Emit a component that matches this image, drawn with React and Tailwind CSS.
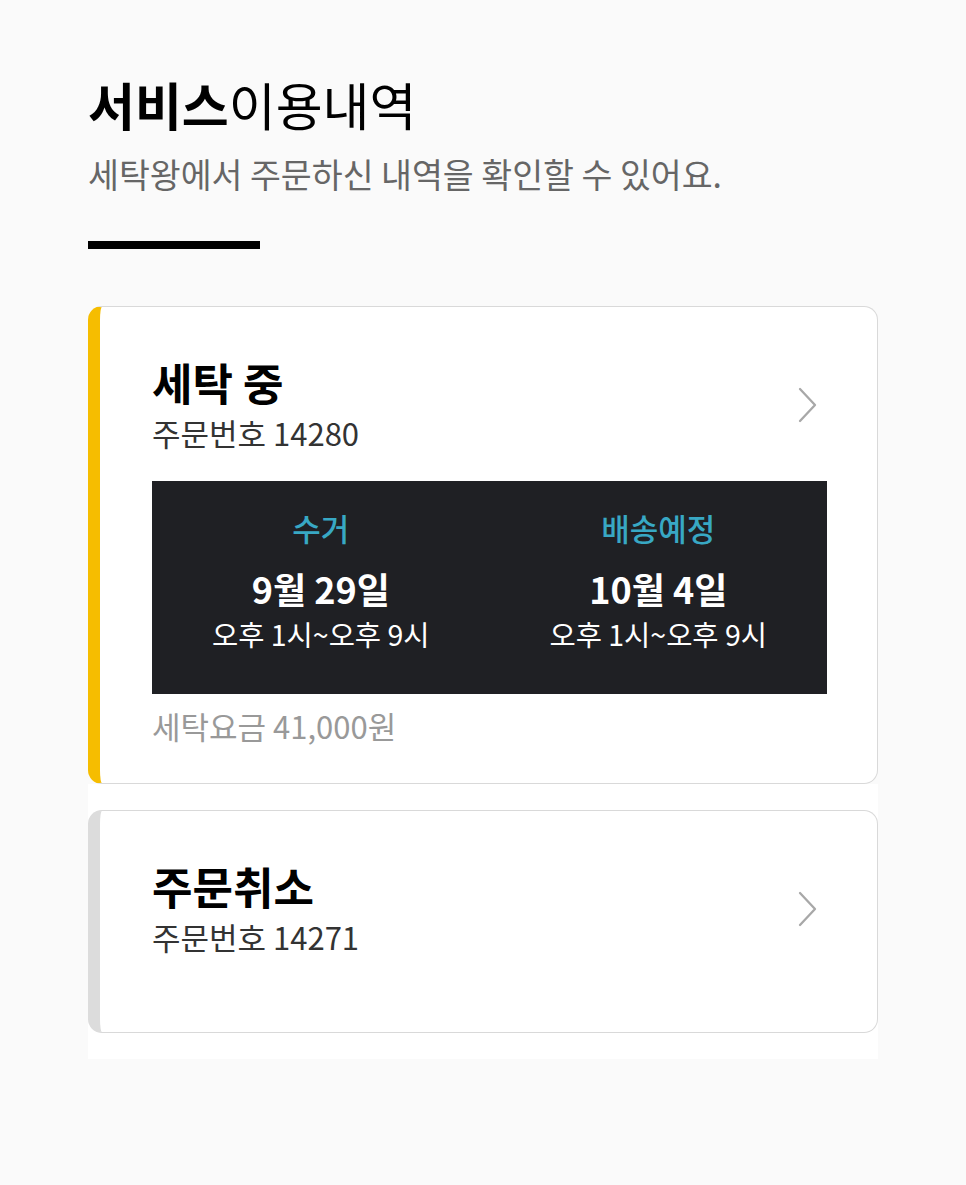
import React from 'react'

const font = { fontFamily: '"Noto Sans CJK KR", "Noto Sans", sans-serif' }

const Chevron = () => (
  <svg width="24" height="38" viewBox="0 0 24 38" fill="none" className="shrink-0">
    <path d="M4 3 L19 19 L4 35" stroke="#a8a8a8" strokeWidth="2.3" strokeLinecap="round" strokeLinejoin="round" />
  </svg>
)

const orders = [
  {
    id: 14280,
    status: '세탁 중',
    active: true,
    pickup: { date: '9월 29일', time: '오후 1시~오후 9시' },
    delivery: { date: '10월 4일', time: '오후 1시~오후 9시' },
    price: '41,000원'
  },
  { id: 14271, status: '주문취소', active: false }
]

const Schedule = ({ label, date, time }) => (
  <div className="flex flex-col items-center">
    <div className="text-[31px] leading-[40px] font-medium text-[#38a8c4]">{label}</div>
    <div className="mt-[18px] text-[36px] leading-[44px] font-bold text-white">{date}</div>
    <div className="mt-[5px] text-[28.5px] leading-[38px] text-white">{time}</div>
  </div>
)

const OrderCard = ({ order }) => (
  <div
    className={`rounded-[14px] border border-[#d9d9d9] border-l-[12px] bg-white ${
      order.active ? 'border-l-[#f6bd00] pb-[36px]' : 'border-l-[#dcdcdc] pb-[75px]'
    } pt-[49px] pl-[52px] pr-[50px]`}
  >
    <div className="flex items-center justify-between">
      <div>
        <div className="text-[44px] leading-[52px] font-bold text-black">{order.status}</div>
        <div className="mt-[5px] text-[31px] leading-[40px] text-[#333]">주문번호 {order.id}</div>
      </div>
      <div className="mr-[7px]">
        <Chevron />
      </div>
    </div>
    {order.active && (
      <>
        <div className="mt-[28px] grid grid-cols-2 bg-[#1f2024] pt-[27px] pb-[41px]">
          <Schedule label="수거" date={order.pickup.date} time={order.pickup.time} />
          <Schedule label="배송예정" date={order.delivery.date} time={order.delivery.time} />
        </div>
        <div className="mt-[11px] text-[31px] leading-[42px] text-[#999]">세탁요금 {order.price}</div>
      </>
    )}
  </div>
)

export default function App() {
  return (
    <div className="min-h-screen bg-[#fafafa]" style={font}>
      <div className="pl-[88px] pr-[88px] pt-[72px] pb-[125px]">
        <h1 className="text-[51px] leading-[64px] text-black">
          <span className="font-bold">서비스</span>
          <span className="font-normal">이용내역</span>
        </h1>
        <p className="mt-[16px] text-[33.6px] leading-[44px] text-[#666]">세탁왕에서 주문하신 내역을 확인할 수 있어요.</p>
        <div className="mt-[45px] h-[8px] w-[172px] bg-black" />
        <div className="mt-[57px]">
          <OrderCard order={orders[0]} />
          <div className="bg-white pt-[26px] pb-[26px]">
            <OrderCard order={orders[1]} />
          </div>
        </div>
      </div>
    </div>
  )
}
